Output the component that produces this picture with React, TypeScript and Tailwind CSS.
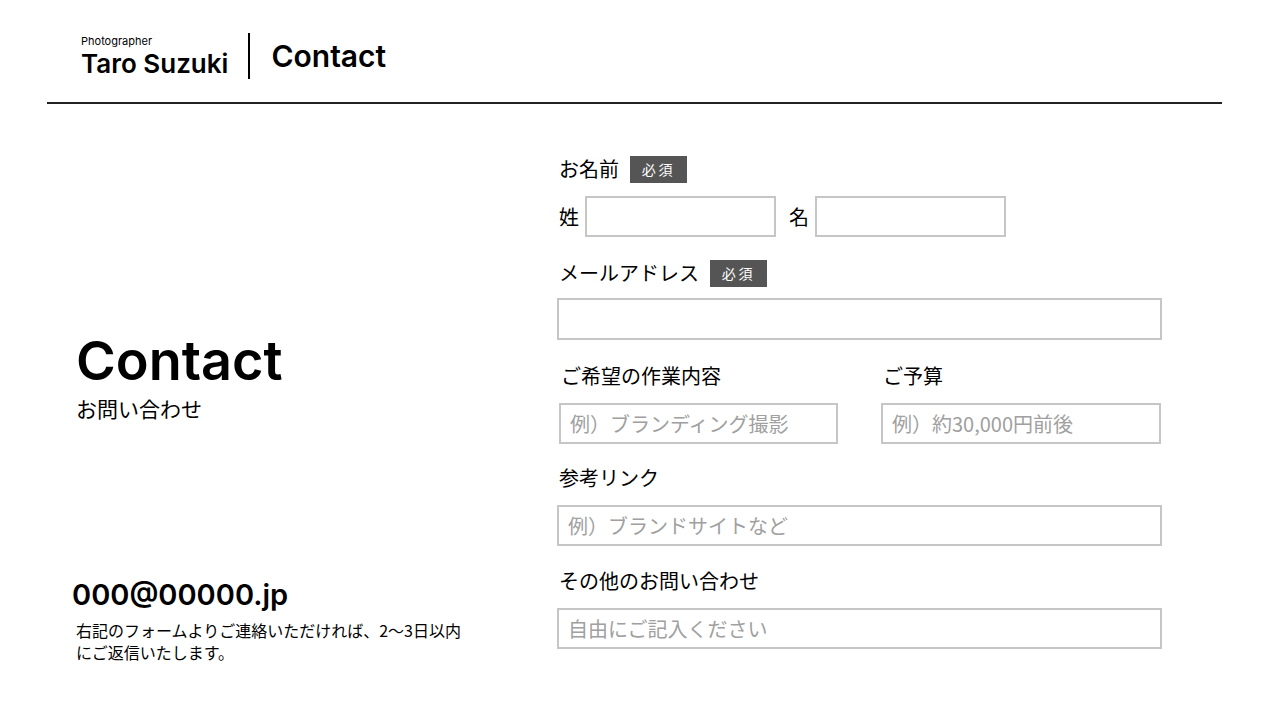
const jp = { fontFamily: '"Noto Sans CJK JP", "Noto Sans", sans-serif' };
const latin = { fontFamily: 'Inter, "Noto Sans CJK JP", sans-serif' };

function Required() {
  return (
    <span className="ml-[11px] inline-flex h-[27px] w-[57px] items-center justify-center bg-[#555555] text-[14px] tracking-[0.2em] text-white">
      必須
    </span>
  );
}

function Field({ placeholder, className = '' }: { placeholder?: string; className?: string }) {
  return (
    <div
      className={`flex h-[41px] items-center border-2 border-[#c6c6c6] bg-white px-[9px] text-[20px] text-[#a0a0a0] ${className}`}
    >
      {placeholder}
    </div>
  );
}

export default function App() {
  return (
    <div className="h-[720px] w-[1280px] overflow-hidden bg-white text-black" style={jp}>
      <header className="flex h-[102px] items-center pl-[81px] pt-[10px]">
        <div className="flex flex-col" style={latin}>
          <span className="text-[11px] leading-[12px]">Photographer</span>
          <span className="mt-[3px] text-[26px] font-semibold leading-[28px]">Taro Suzuki</span>
        </div>
        <div className="ml-[20px] h-[46px] w-[2px] bg-black" />
        <h1 className="ml-[21px] text-[30px] font-semibold" style={latin}>
          Contact
        </h1>
      </header>
      <div className="ml-[47px] h-[2px] w-[1175px] bg-[#222222]" />

      <main className="flex">
        <section className="flex w-[557px] flex-col pl-[76px]">
          <h2 className="mt-[229px] text-[54px] font-semibold leading-[56px]" style={latin}>
            Contact
          </h2>
          <p className="mt-[6px] text-[21px] leading-[26px]">お問い合わせ</p>
          <p className="ml-[-4px] mt-[157px] text-[29px] font-semibold leading-[34px]" style={latin}>
            000@00000.jp
          </p>
          <p className="mt-[7px] text-[16px] leading-[22px]">
            右記のフォームよりご連絡いただければ、2〜3日以内
            <br />
            にご返信いたします。
          </p>
        </section>

        <section className="flex w-[605px] flex-col pt-[51px] text-[20px]">
          <div className="flex h-[28px] items-center pl-[2px]">
            <span>お名前</span>
            <Required />
          </div>
          <div className="mt-[13px] flex items-center">
            <span className="pl-[2px]">姓</span>
            <Field className="ml-[6px] w-[191px]" />
            <span className="ml-[13px]">名</span>
            <Field className="ml-[6px] w-[191px]" />
          </div>
          <div className="mt-[22px] flex h-[28px] items-center pl-[2px]">
            <span>メールアドレス</span>
            <Required />
          </div>
          <Field className="mt-[11px] h-[42px] w-[605px]" />

          <div className="mt-[22px] flex">
            <div className="flex flex-col pl-[2px]">
              <span className="h-[28px] pl-[2px] leading-[28px]">ご希望の作業内容</span>
              <Field className="mt-[13px] w-[279px]" placeholder="例）ブランディング撮影" />
            </div>
            <div className="ml-[43px] flex flex-col">
              <span className="h-[28px] pl-[2px] leading-[28px]">ご予算</span>
              <Field className="mt-[13px] w-[280px]" placeholder="例）約30,000円前後" />
            </div>
          </div>

          <span className="mt-[20px] h-[28px] pl-[2px] leading-[28px]">参考リンク</span>
          <Field className="mt-[13px] w-[605px]" placeholder="例）ブランドサイトなど" />

          <span className="mt-[21px] h-[28px] pl-[2px] leading-[28px]">その他のお問い合わせ</span>
          <Field className="mt-[13px] w-[605px]" placeholder="自由にご記入ください" />
        </section>
      </main>
    </div>
  );
}
